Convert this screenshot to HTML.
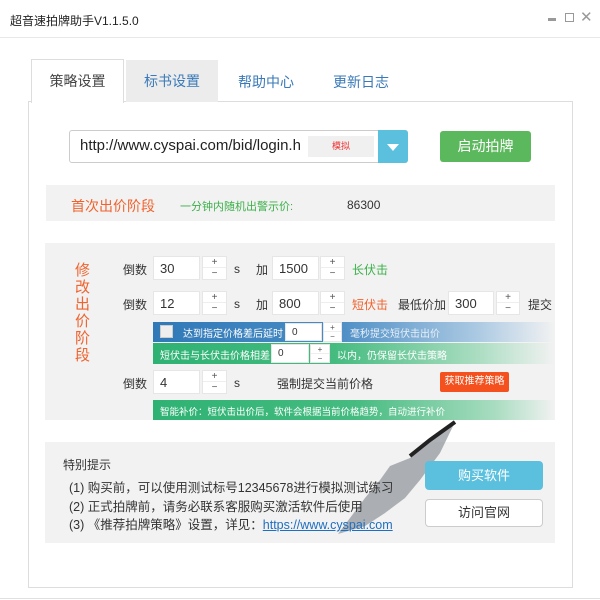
<!DOCTYPE html>
<html><head><meta charset="utf-8"><style>
*{margin:0;padding:0;box-sizing:border-box}
body{width:600px;height:600px;background:#fff;font-family:"Liberation Sans","Noto Sans CJK SC",sans-serif;font-size:12px;color:#333;position:relative;overflow:hidden}
.a{position:absolute;white-space:nowrap}
.inp{position:absolute;background:#fff;border:1px solid #e6e6e6;font-size:13px;padding-left:6px;display:flex;align-items:center}
.sp{position:absolute;background:#fff;border:1px solid #e6e6e6;font-size:10px;color:#555;text-align:center;line-height:11px}
.sp div{height:50%;border-bottom:1px solid #eee}
.sp div:last-child{border:none}
.box{position:absolute;background:#f2f2f2}
.bt{color:#fff;font-size:10px}
</style></head><body>
<div class="a" style="left:10px;top:12px;font-size:12px;color:#222">超音速拍牌助手V1.1.5.0</div>
<div class="a" style="left:548px;top:18px;width:8px;height:3px;background:#999"></div>
<div class="a" style="left:565px;top:13px;width:9px;height:9px;border:1px solid #999"></div>
<div class="a" style="left:580px;top:8px;font-size:15px;color:#999">✕</div>
<div class="a" style="left:0;top:37px;width:600px;height:1px;background:#e8e8e8"></div>
<div class="a" style="left:0;top:598px;width:600px;height:1px;background:#e0e0e0"></div>
<div class="a" style="left:28px;top:101px;width:545px;height:487px;border:1px solid #ddd"></div>
<div class="a" style="left:31px;top:59px;width:93px;height:44px;background:#fff;border:1px solid #ddd;border-bottom:none;font-size:14px;color:#444;text-align:center;line-height:42px">策略设置</div>
<div class="a" style="left:126px;top:60px;width:92px;height:42px;background:#ececec;font-size:14px;color:#3a7ab8;text-align:center;line-height:42px">标书设置</div>
<div class="a" style="left:238px;top:72px;font-size:14px;color:#3a7ab8">帮助中心</div>
<div class="a" style="left:333px;top:72px;font-size:14px;color:#3a7ab8">更新日志</div>
<div class="a" style="left:69px;top:130px;width:339px;height:33px;border:1px solid #ccc;border-radius:3px;background:#fff"></div>
<div class="a" style="left:80px;top:137px;font-size:15px;color:#222">http://www.cyspai.com/bid/login.h</div>
<div class="a" style="left:308px;top:136px;width:66px;height:21px;background:#f0f0f0;color:#e33;font-size:9px;text-align:center;line-height:21px">模拟</div>
<div class="a" style="left:378px;top:130px;width:30px;height:33px;background:#5bc0de;border-radius:0 3px 3px 0"></div>
<div class="a" style="left:387px;top:144px;border-left:6px solid transparent;border-right:6px solid transparent;border-top:7px solid #fff"></div>
<div class="a" style="left:440px;top:131px;width:91px;height:31px;background:#5cb85c;border-radius:3px;color:#fff;font-size:14px;text-align:center;line-height:31px">启动拍牌</div>

<div class="box" style="left:46px;top:185px;width:509px;height:36px"></div>
<div class="a" style="left:71px;top:196px;font-size:14px;color:#f0632e">首次出价阶段</div>
<div class="a" style="left:180px;top:198px;color:#3cb04a;font-size:11px">一分钟内随机出警示价:</div>
<div class="a" style="left:347px;top:198px;color:#333">86300</div>

<div class="box" style="left:45px;top:243px;width:510px;height:177px"></div>
<div class="a" style="left:75px;top:262px;width:16px;font-size:15px;line-height:17px;color:#f0632e;white-space:normal">修改出价阶段</div>
<div class="a" style="left:123px;top:261px">倒数</div>
<div class="inp" style="left:153px;top:256px;width:47px;height:24px">30</div>
<div class="sp" style="left:202px;top:256px;width:25px;height:24px"><div>+</div><div>−</div></div>
<div class="a" style="left:234px;top:262px">s</div>
<div class="a" style="left:256px;top:261px">加</div>
<div class="inp" style="left:272px;top:256px;width:47px;height:24px">1500</div>
<div class="sp" style="left:320px;top:256px;width:25px;height:24px"><div>+</div><div>−</div></div>
<div class="a" style="left:352px;top:261px;color:#3cb04a">长伏击</div>

<div class="a" style="left:123px;top:296px">倒数</div>
<div class="inp" style="left:153px;top:291px;width:47px;height:24px">12</div>
<div class="sp" style="left:202px;top:291px;width:25px;height:24px"><div>+</div><div>−</div></div>
<div class="a" style="left:234px;top:297px">s</div>
<div class="a" style="left:256px;top:296px">加</div>
<div class="inp" style="left:272px;top:291px;width:47px;height:24px">800</div>
<div class="sp" style="left:320px;top:291px;width:25px;height:24px"><div>+</div><div>−</div></div>
<div class="a" style="left:352px;top:296px;color:#f0632e">短伏击</div>
<div class="a" style="left:398px;top:296px">最低价加</div>
<div class="inp" style="left:448px;top:291px;width:46px;height:24px">300</div>
<div class="sp" style="left:496px;top:291px;width:24px;height:24px"><div>+</div><div>−</div></div>
<div class="a" style="left:528px;top:296px">提交</div>

<div class="a" style="left:153px;top:322px;width:402px;height:20px;background:linear-gradient(90deg,#2f79b8 0%,#4a8cc4 45%,#a9c8e2 80%,#f2f2f2 100%)"></div>
<div class="a" style="left:160px;top:325px;width:13px;height:13px;background:#eee;border:1px solid #ccc"></div>
<div class="a bt" style="left:183px;top:325px">达到指定价格差后延时</div>
<div class="inp" style="left:285px;top:323px;width:37px;height:18px;font-size:10px">0</div>
<div class="sp" style="left:323px;top:322px;width:19px;height:20px;font-size:8px;line-height:9px"><div>+</div><div>−</div></div>
<div class="a bt" style="left:350px;top:325px;color:#e8f0f8">毫秒提交短伏击出价</div>

<div class="a" style="left:153px;top:343px;width:402px;height:21px;background:linear-gradient(90deg,#2eb273 0%,#45bb80 45%,#a8dcc0 80%,#f2f2f2 100%)"></div>
<div class="a bt" style="left:160px;top:347px">短伏击与长伏击价格相差</div>
<div class="inp" style="left:271px;top:344px;width:38px;height:19px;font-size:10px">0</div>
<div class="sp" style="left:310px;top:344px;width:20px;height:19px;font-size:8px;line-height:9px"><div>+</div><div>−</div></div>
<div class="a bt" style="left:337px;top:347px">以内，仍保留长伏击策略</div>

<div class="a" style="left:123px;top:375px">倒数</div>
<div class="inp" style="left:153px;top:370px;width:47px;height:24px">4</div>
<div class="sp" style="left:202px;top:370px;width:25px;height:24px"><div>+</div><div>−</div></div>
<div class="a" style="left:234px;top:376px">s</div>
<div class="a" style="left:277px;top:375px">强制提交当前价格</div>
<div class="a" style="left:440px;top:372px;width:69px;height:20px;background:#f4511e;border-radius:2px;color:#fff;font-size:10px;text-align:center;line-height:20px">获取推荐策略</div>

<div class="a" style="left:153px;top:400px;width:402px;height:20px;background:linear-gradient(90deg,#2eb273 0%,#45bb80 50%,#a8dcc0 85%,#f2f2f2 100%)"></div>
<div class="a bt" style="left:160px;top:404px;font-size:9.5px">智能补价：短伏击出价后，软件会根据当前价格趋势，自动进行补价</div>

<div class="box" style="left:45px;top:442px;width:510px;height:101px"></div>
<svg class="a" style="left:330px;top:418px" width="130" height="120" viewBox="0 0 130 120"><path d="M125 4 L100 22 L80 40 L60 48 L50 62 L35 80 L20 100 L8 116 L35 108 L55 95 L75 80 L90 62 L110 35 Z" fill="#8d9298" opacity="0.7"/><path d="M125 4 L100 22 L80 38" stroke="#222" stroke-width="4" fill="none"/></svg>
<div class="a" style="left:63px;top:456px;font-size:12px">特别提示</div>
<div class="a" style="left:69px;top:477px;font-size:12.5px">(1) 购买前，可以使用测试标号12345678进行模拟测试练习</div>
<div class="a" style="left:69px;top:496px;font-size:12.5px">(2) 正式拍牌前，请务必联系客服购买激活软件后使用</div>
<div class="a" style="left:69px;top:514px;font-size:12.5px">(3) 《推荐拍牌策略》设置，详见：<span style="color:#1e6fc0;text-decoration:underline">https://www.cyspai.com</span></div>
<div class="a" style="left:425px;top:461px;width:118px;height:29px;background:#5bc0de;border-radius:4px;color:#fff;font-size:13px;text-align:center;line-height:29px">购买软件</div>
<div class="a" style="left:425px;top:499px;width:118px;height:28px;background:#fff;border:1px solid #ccc;border-radius:4px;color:#333;font-size:13px;text-align:center;line-height:26px">访问官网</div>
</body></html>
